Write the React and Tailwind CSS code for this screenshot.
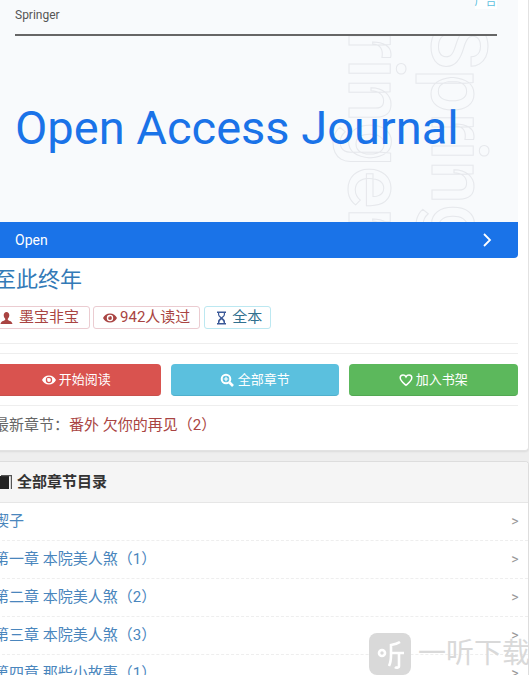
import React from 'react';

const chapters = ['楔子', '第一章 本院美人煞（1）', '第二章 本院美人煞（2）', '第三章 本院美人煞（3）', '第四章 那些小故事（1）'];

const EyeIcon = ({ size = 14 }) => (
  <svg width={size} height={size} viewBox="0 0 14 14" fill="currentColor">
    <path fillRule="evenodd" d="M7 2.500C3.800 2.500 1.200 4.600 0 7c1.200 2.400 3.800 4.500 7 4.500s5.800-2.100 7-4.500c-1.200-2.400-3.800-4.500-7-4.500zM7 3.800a3.200 3.200 0 1 1 0 6.400 3.200 3.200 0 0 1 0-6.400z" />
    <circle cx="7" cy="7" r="1.900" />
    <circle cx="5.900" cy="5.800" r="0.700" fill="white" />
  </svg>
);

const UserIcon = () => (
  <svg width="13" height="14" viewBox="0 0 13 14" fill="currentColor">
    <path d="M6.500 1C4.800 1 3.700 2.300 3.700 4.200c0 1.500.7 2.800 1.500 3.500v1.200C3.500 9.800.8 10.300.5 13h12c-.3-2.700-3-3.200-4.700-4.100V7.700c.8-.7 1.500-2 1.500-3.500C9.300 2.300 8.200 1 6.500 1z" />
  </svg>
);

const HourglassIcon = () => (
  <svg width="11" height="14" viewBox="0 0 11 14" fill="currentColor">
    <path fillRule="evenodd" d="M1 .5h9v1.500H9v1.600C9 5.200 7.500 6.200 6.600 7 7.500 7.800 9 8.800 9 10.400V12h1v1.500H1V12h1v-1.600C2 8.800 3.500 7.800 4.400 7 3.500 6.200 2 5.200 2 3.600V2H1zM3.200 2v1.600c0 .9 1.300 1.900 2.300 2.700 1-.8 2.300-1.800 2.300-2.700V2zM5.500 8.500C4.500 9.200 3.500 10 3.300 12h4.400c-.2-2-1.200-2.800-2.200-3.500z" />
  </svg>
);

const ZoomIcon = () => (
  <svg width="14" height="14" viewBox="0 0 14 14" fill="none" stroke="currentColor">
    <circle cx="6" cy="6" r="4.300" strokeWidth="2" />
    <path d="M9.500 9.500L13 13" strokeWidth="2.600" />
    <path d="M3.800 6h4.400M6 3.800v4.400" strokeWidth="1.200" />
  </svg>
);

const HeartIcon = () => (
  <svg width="14" height="14" viewBox="0 0 14 14" fill="none" stroke="currentColor" strokeWidth="1.500">
    <path d="M7 12.300C4.500 10 1.200 7.800 1.200 4.800 1.200 3 2.500 1.900 4 1.900c1.300 0 2.400.7 3 1.900.6-1.200 1.700-1.900 3-1.900 1.500 0 2.800 1.100 2.800 2.900 0 3-3.300 5.200-5.800 7.500z" />
  </svg>
);

const Ad = () => (
  <div className="relative h-[258px] overflow-hidden rounded-br-[4px] bg-[#f8fafc]">
    <div className="absolute right-[21px] top-[-5px] bg-white text-[11px] leading-[14px] text-[#5bc0de]">广告</div>
    <div className="pl-[23px] pr-[21px]">
      <div className="h-[36px] border-b-2 border-[#666] pt-[7px] font-['Roboto'] text-[12px] leading-[16px] text-[#555]">Springer</div>
    </div>
    <div className="absolute left-0 right-0 top-[36px] h-[186px] overflow-hidden">
      <div className="absolute left-[427px] top-[-14px] font-['Roboto'] text-[78px] leading-[78px] font-medium text-transparent [-webkit-text-stroke:1px_#e6e8ec] [writing-mode:vertical-rl]">Springer</div>
      <div className="absolute left-[344px] top-[-96px] font-['Roboto'] text-[78px] leading-[78px] font-medium text-transparent [-webkit-text-stroke:1px_#e6e8ec] [writing-mode:vertical-rl]">Springer</div>
    </div>
    <div className="relative flex h-[186px] items-center pl-[23px]">
      <div className="mt-[-2px] font-['Roboto'] text-[47px] leading-[56px] whitespace-nowrap text-[#1a73e8]">Open Access Journal</div>
    </div>
    <div className="relative flex h-[36px] items-center justify-between bg-[#1a73e8] pl-[23px] pr-[24px] font-['Roboto'] text-[14px] text-white">
      <span>Open</span>
      <svg width="14" height="18" viewBox="0 0 14 18" fill="none" stroke="white" strokeWidth="1.8"><path d="M4 3l6 6-6 6" /></svg>
    </div>
  </div>
);

const Badge = ({ className, children }) => (
  <span className={`inline-flex h-[23px] items-center rounded-[3px] border text-[15px] leading-none ${className}`}>{children}</span>
);

export default function App() {
  return (
    <div className="h-[675px] w-[529px] overflow-hidden bg-[#eeeeee] font-['Roboto','Noto_Sans_CJK_SC',sans-serif]">
      <div className="ml-[-8px] w-[536.5px]">
        <div className="h-[451px] rounded-br-[4px] border-b border-r border-[#e2e2e2] bg-white pr-[10px] shadow-[0_1px_2px_rgba(0,0,0,0.08)]">
          <Ad />
          <h1 className="mt-[9px] pl-[2px] text-[22px] leading-[26px] font-normal text-[#337ab7]">至此终年</h1>
          <div className="mt-[13px] flex gap-[3px] pl-[2px]">
            <Badge className="gap-[6px] border-[#ebccd1] pl-[5px] pr-[10px] text-[#a94442]">
              <UserIcon />墨宝非宝
            </Badge>
            <Badge className="gap-[3px] border-[#ebccd1] px-[9px] text-[#a94442]">
              <EyeIcon />942人读过
            </Badge>
            <Badge className="ml-[1px] gap-[5px] border-[#bce8f1] pl-[11px] pr-[8px] text-[#31708f]">
              <span className="text-[#3b5998]"><HourglassIcon /></span>全本
            </Badge>
          </div>
          <div className="mt-[14px] border-t border-[#eeeeee]" />
          <div className="mt-[9px] border-t border-[#eeeeee]" />
          <div className="mt-[10px] grid grid-cols-3 gap-[10px]">
            <div className="flex h-[32px] items-center justify-center gap-[3px] rounded-[4px] border-b border-[#c9504c] bg-[#d9534f] text-[13px] text-white">
              <EyeIcon />开始阅读
            </div>
            <div className="flex h-[32px] items-center justify-center gap-[4px] rounded-[4px] border-b border-[#4fb0cc] bg-[#5bc0de] text-[13px] text-white">
              <ZoomIcon />全部章节
            </div>
            <div className="flex h-[32px] items-center justify-center gap-[3px] rounded-[4px] border-b border-[#52a852] bg-[#5cb85c] text-[13px] text-white">
              <HeartIcon />加入书架
            </div>
          </div>
          <div className="mt-[9px] border-t border-[#eeeeee]" />
          <div className="mt-[8px] pl-[2px] text-[15px] leading-[22px] text-[#666666]">
            最新章节：<span className="text-[#a94442]">番外 欠你的再见（2）</span>
          </div>
        </div>
        <div className="mt-[10px] overflow-hidden rounded-tr-[4px] border-r border-t border-[#dddddd] bg-white">
          <div className="flex h-[41px] items-center gap-[5px] border-b border-[#e6e6e6] bg-[#f5f5f5] pl-[6px] text-[15px] font-bold text-[#333333]">
            <svg width="14" height="14" viewBox="0 0 14 14"><path d="M0 1h11v13H0z" fill="#222" /><path d="M12 0h2v14h-1.200V1.200H3V0z" fill="#555" /></svg>
            全部章节目录
          </div>
          {chapters.map((c) => (
            <div key={c} className="flex h-[38px] items-center justify-between border-b border-dashed border-[#eeeeee] pl-[2px] pr-[9px] text-[15px] text-[#4a86bd]">
              <span>{c}</span>
              <span className="text-[14px] text-[#999999]">&gt;</span>
            </div>
          ))}
        </div>
      </div>
      {/* watermark floats over the list */}
      <div className="absolute left-[369px] top-[633px] flex items-center gap-[7px]">
        <div className="h-[42px] w-[42px] rounded-[8px] bg-[#d9d9d9]">
          <svg width="42" height="42" viewBox="0 0 42 42" fill="none" stroke="white" strokeWidth="2.600">
            <circle cx="13" cy="20" r="3" />
            <path d="M31 9c-3 2-6 2.500-9 3v10c0 5-.5 8-2 11M22 20h13M30 20v13c0 2-3 2-4 1" />
          </svg>
        </div>
        <div className="text-[28px] leading-none whitespace-nowrap text-[#d9d9d9]">一听下载</div>
      </div>
    </div>
  );
}
